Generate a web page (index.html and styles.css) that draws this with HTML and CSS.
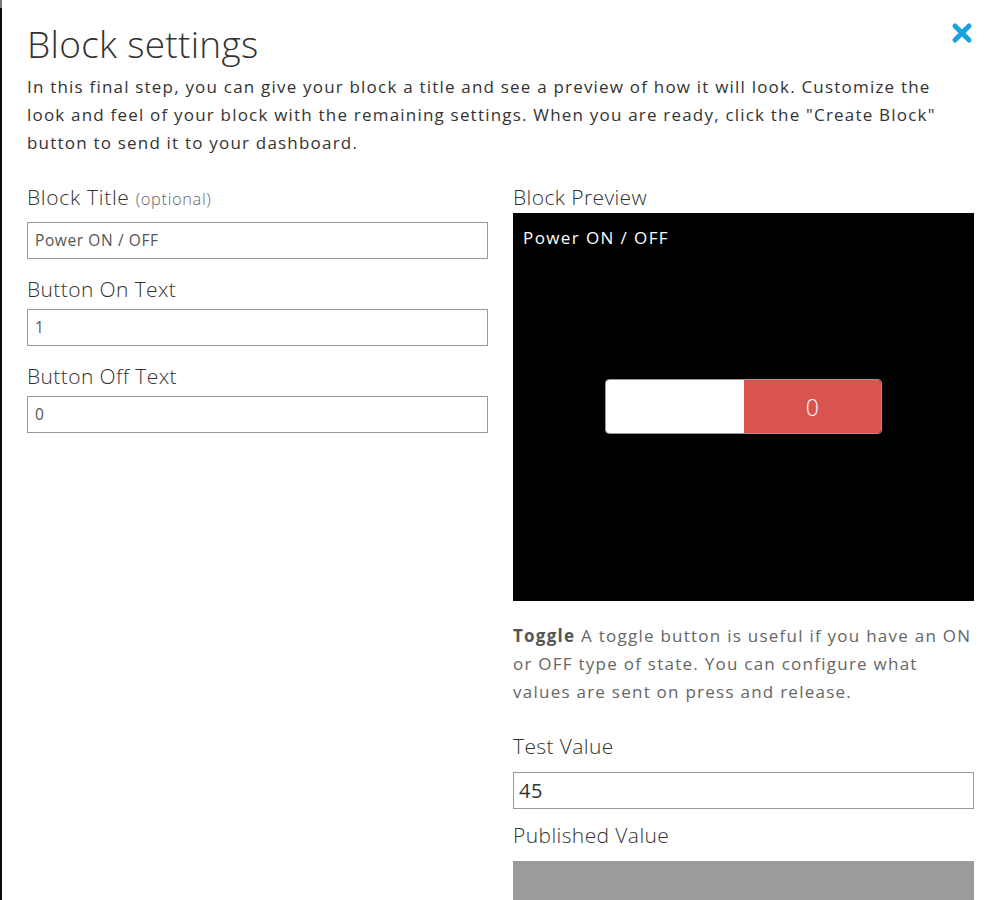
FILE: index.html
```html
<!DOCTYPE html>
<html lang="en">
<head>
<meta charset="utf-8">
<title>Block settings</title>
<link rel="stylesheet" href="styles.css">
</head>
<body>
<div class="page">
  <div class="edge"></div>
  <div class="modal">
    <div class="header">
      <h1 class="title">Block settings</h1>
      <button class="close" aria-label="Close">
        <svg width="22" height="22" viewBox="0 0 22 22"><path d="M4 4 L18 18 M18 4 L4 18" stroke="#16a2dd" stroke-width="5" stroke-linecap="round"/></svg>
      </button>
    </div>
    <p class="intro">In this final step, you can give your block a title and see a preview of how it will look. Customize the look and feel of your block with the remaining settings. When you are ready, click the "Create Block" button to send it to your dashboard.</p>
    <div class="columns">
      <div class="col">
        <label class="label first">Block Title <span class="small">(optional)</span></label>
        <div class="input">Power ON / OFF</div>
        <label class="label">Button On Text</label>
        <div class="input">1</div>
        <label class="label">Button Off Text</label>
        <div class="input">0</div>
      </div>
      <div class="col right">
        <label class="label flush">Block Preview</label>
        <div class="preview">
          <div class="preview-title">Power ON / OFF</div>
          <div class="preview-body">
            <div class="toggle">
              <div class="toggle-on"></div>
              <div class="toggle-off">0</div>
            </div>
          </div>
        </div>
        <p class="desc"><b>Toggle</b> A toggle button is useful if you have an ON or OFF type of state. You can configure what values are sent on press and release.</p>
        <label class="label">Test Value</label>
        <div class="input big">45</div>
        <label class="label">Published Value</label>
        <div class="published"></div>
      </div>
    </div>
  </div>
</div>
</body>
</html>
```
FILE: styles.css
```css
html, body {
  margin: 0;
  padding: 0;
  background: #fff;
  height: 100%;
  overflow: hidden;
}
body {
  font-family: "Open Sans", Lato, sans-serif;
  color: #333;
}
.page {
  display: flex;
  height: 900px;
}
.edge {
  width: 2px;
  background: linear-gradient(#777 0, #777 8px, #0a0a0a 8px);
  flex: none;
}
.modal {
  flex: 1;
  padding: 0 23px 0 25px;
}
.header {
  display: flex;
  justify-content: space-between;
  align-items: flex-start;
}
.title {
  margin: 21px 0 0;
  font-weight: 300;
  font-size: 37px;
  line-height: 46px;
  letter-spacing: 0.3px;
  color: #333;
}
.close {
  border: 0;
  background: none;
  padding: 0;
  margin: 22px 1px 0 0;
  width: 22px;
  height: 22px;
  display: block;
}
.close svg { display: block; }
.intro {
  margin: 6px 0 0;
  font-size: 17px;
  line-height: 28px;
  letter-spacing: 1.2px;
  color: #333;
}
.columns {
  display: grid;
  grid-template-columns: 461px 461px;
  column-gap: 25px;
  margin-top: 26px;
}
.col {
  display: flex;
  flex-direction: column;
}
.label {
  font-size: 21px;
  font-weight: 300;
  line-height: 28px;
  letter-spacing: 0.4px;
  color: #333;
  margin-bottom: 6px;
}
.label.first { margin-bottom: 9px; letter-spacing: 0.7px; }
.right .label { margin-bottom: 12px; }
.right .label.flush { margin-bottom: 2px; }
.small {
  font-size: 16.5px;
  letter-spacing: 0.6px;
  color: #666;
}
.input {
  box-sizing: border-box;
  height: 37px;
  border: 1px solid #999;
  padding: 0 7px;
  font-size: 15.5px;
  font-weight: 400;
  letter-spacing: 0.6px;
  line-height: 35px;
  color: #555;
  margin-bottom: 16px;
}
.input.big {
  font-size: 20px;
  letter-spacing: 0.5px;
  color: #333;
  padding: 0 5px;
  margin-bottom: 12px;
}
.preview {
  background: #000;
  height: 388px;
  display: flex;
  flex-direction: column;
}
.preview-title {
  color: #fff;
  font-size: 17px;
  letter-spacing: 1.4px;
  padding: 14px 10px 0;
  line-height: 22px;
}
.preview-body {
  flex: 1;
  display: flex;
  align-items: center;
  justify-content: center;
  padding-bottom: 37px;
}
.toggle {
  display: flex;
  width: 277px;
  height: 55px;
  box-sizing: border-box;
  border: 1px solid #999;
  border-radius: 4px;
  overflow: hidden;
}
.toggle-on {
  flex: 1;
  background: #fff;
}
.toggle-off {
  flex: 1;
  background: #d9534f;
  color: #fff;
  font-size: 23px;
  font-weight: 300;
  display: flex;
  align-items: center;
  justify-content: center;
}
.desc {
  margin: 21px 0 26px;
  font-size: 17px;
  line-height: 28px;
  letter-spacing: 1.25px;
  color: #666;
}
.desc b { color: #555; }
.published {
  height: 40px;
  background: #9b9b9b;
}
```
